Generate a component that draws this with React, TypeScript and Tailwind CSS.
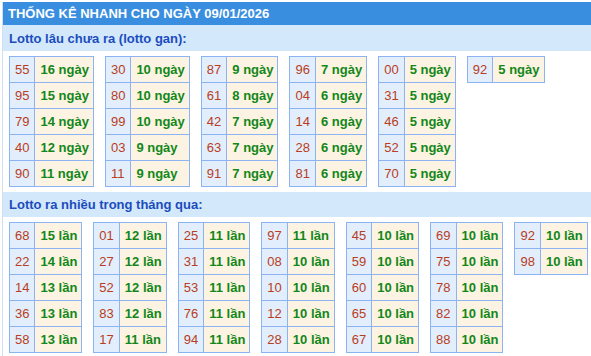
type Row = [string, number];

const gan: Row[][] = [
  [["55", 16], ["95", 15], ["79", 14], ["40", 12], ["90", 11]],
  [["30", 10], ["80", 10], ["99", 10], ["03", 9], ["11", 9]],
  [["87", 9], ["61", 8], ["42", 7], ["63", 7], ["91", 7]],
  [["96", 7], ["04", 6], ["14", 6], ["28", 6], ["81", 6]],
  [["00", 5], ["31", 5], ["46", 5], ["52", 5], ["70", 5]],
  [["92", 5]],
];

const nhieu: Row[][] = [
  [["68", 15], ["22", 14], ["14", 13], ["36", 13], ["58", 13]],
  [["01", 12], ["27", 12], ["52", 12], ["83", 12], ["17", 11]],
  [["25", 11], ["31", 11], ["53", 11], ["76", 11], ["94", 11]],
  [["97", 11], ["08", 10], ["10", 10], ["12", 10], ["28", 10]],
  [["45", 10], ["59", 10], ["60", 10], ["65", 10], ["67", 10]],
  [["69", 10], ["75", 10], ["78", 10], ["82", 10], ["88", 10]],
  [["92", 10], ["98", 10]],
];

function LotoTable({ rows, unit }: { rows: Row[]; unit: string }) {
  return (
    <div className="grid shrink-0 grid-cols-[auto_auto] self-start border-l border-t border-[#8cb3f2]">
      {rows.map(([num, count]) => (
        <>
          <div
            key={num + "n"}
            className="flex h-[26px] items-center border-b border-r border-[#8cb3f2] bg-[#e2eefc] px-[5px] text-[#b83d22]"
          >
            {num}
          </div>
          <div
            key={num + "v"}
            className="flex h-[26px] items-center border-b border-r border-[#8cb3f2] bg-[#fdf3e2] pl-[5px] pr-[4px] font-bold text-[#12871a]"
          >
            {count} {unit}
          </div>
        </>
      ))}
    </div>
  );
}

function Section({
  title,
  tables,
  unit,
  first,
}: {
  title: string;
  tables: Row[][];
  unit: string;
  first?: boolean;
}) {
  return (
    <div>
      <div
        className={
          first
            ? "flex h-[26px] items-center bg-[#d4e8fc] pl-[6px] font-bold text-[#1b4dbd]"
            : "flex h-[25px] items-center bg-[#d4e8fc] pl-[6px] font-bold text-[#1b4dbd]"
        }
      >
        {title}
      </div>
      <div className="flex gap-x-[11px] pb-[5px] pl-[6px] pt-[5px]">
        {tables.map((t, i) => (
          <LotoTable key={i} rows={t} unit={unit} />
        ))}
      </div>
    </div>
  );
}

export default function App() {
  return (
    <div className="h-[356px] overflow-hidden bg-white pl-[2px] pt-[2px] font-['Liberation_Sans',Arial,sans-serif] text-[13px] leading-[15px]">
      <div className="border-l border-[#cfe0f5]">
        <div className="flex h-[23px] items-center bg-[#3a8ee0] pl-[5px] font-bold text-white">
          THỐNG KÊ NHANH CHO NGÀY 09/01/2026
        </div>
        <Section title="Lotto lâu chưa ra (lotto gan):" tables={gan} unit="ngày" first />
        <Section title="Lotto ra nhiều trong tháng qua:" tables={nhieu} unit="lần" />
      </div>
    </div>
  );
}
